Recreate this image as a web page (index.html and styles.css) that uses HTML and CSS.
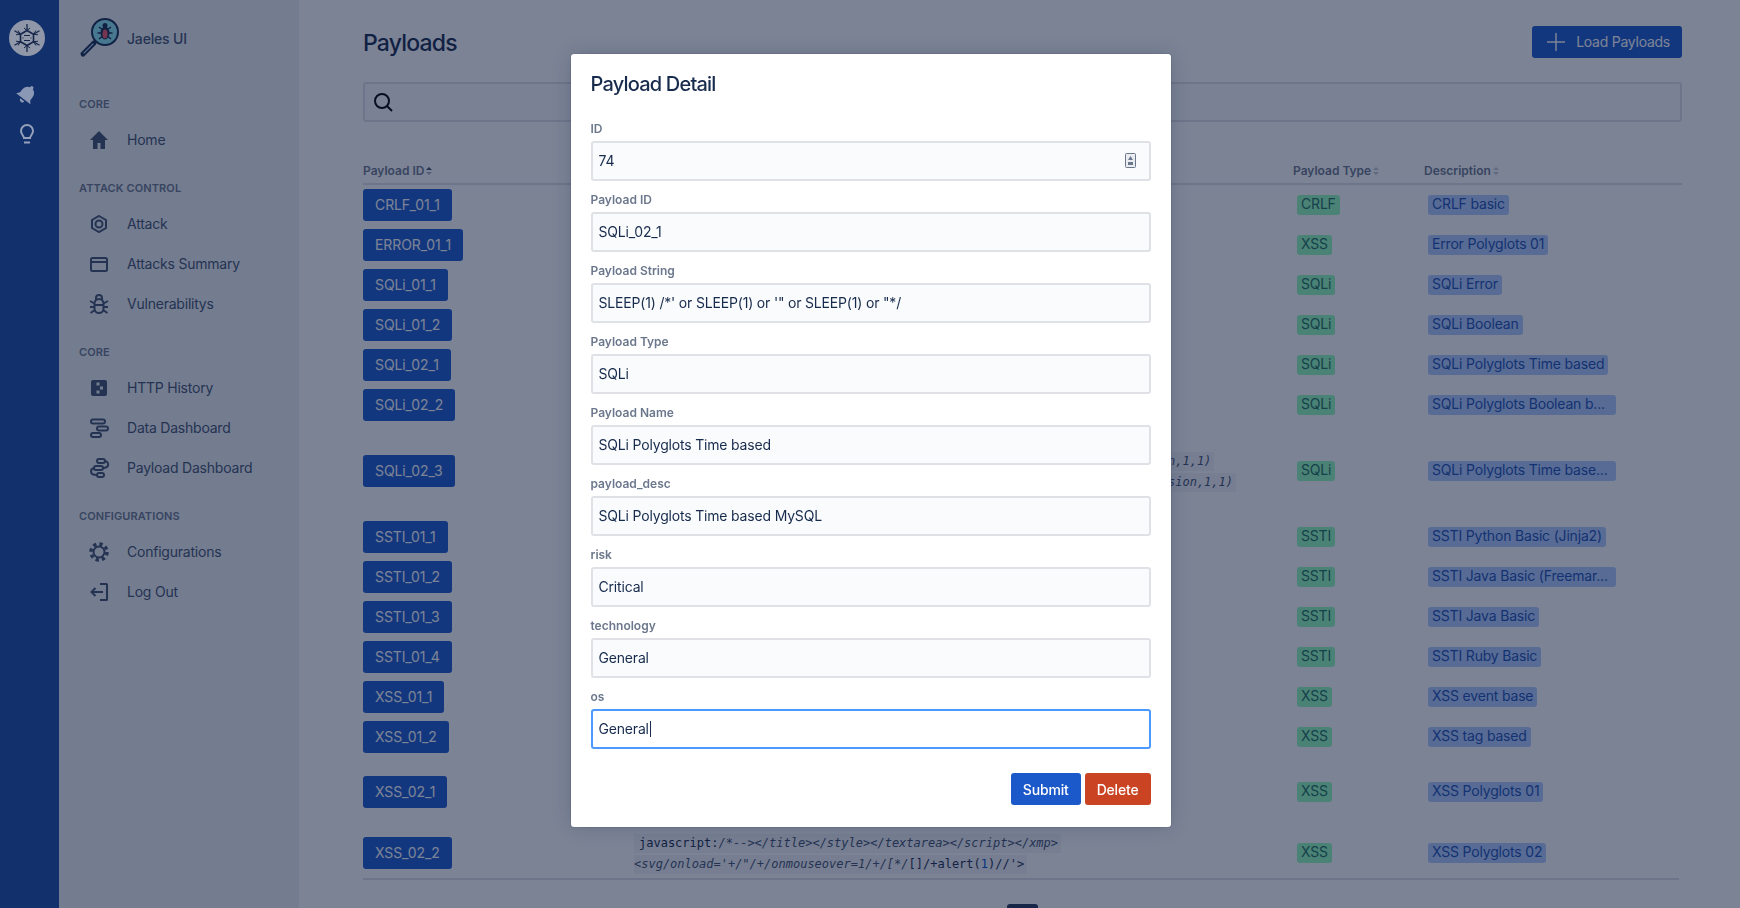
FILE: index.html
```html
<!DOCTYPE html>
<html lang="en">
<head>
    <meta charset="UTF-8">
    <title>Jaeles UI - Payloads</title>
    <link rel="stylesheet" href="styles.css">
</head>
<body>
    <div class="app">

        <nav class="rail">
            <svg class="rail-logo" viewBox="0 0 36 36">
                <circle cx="18" cy="18" r="18" fill="#8f97a9"/>
                <g fill="none" stroke="#16264a" stroke-width="1.300">
                    <path d="M18 10.500l6.500 3.750v7.500L18 25.500l-6.500-3.750v-7.500z" stroke-width="1.600"/>
                    <path d="M18 10.500V4M24.500 14.250l6-3.500M24.500 21.750l6 3.500M18 25.500V32M11.500 21.750l-6 3.500M11.500 14.250l-6-3.500"/>
                    <path d="M15 8l3 2.500 3-2.500M27 10.500l-2.500 3.750 4.500.5M29 21.250l-4.500 .5L27 25.500M21 28l-3-2.500-3 2.500M9 25.500l2.500-3.750-4.500-.5M7 14.750l4.500-.5L9 10.500" stroke-width="1"/>
                    <path d="M15 15.500h6M14.500 18l-1 0M22.500 18l-1 0M15 20.500h6" stroke-width="1"/>
                </g>
            </svg>
            <svg class="rail-icon" viewBox="0 0 24 24">
                <path fill="#8b98b5" transform="rotate(38 12 12)" d="M12 2.500a1.700 1.700 0 0 1 1.700 1.700v.6c3.200.8 4.800 3.500 4.800 6.700v3.500l2.500 3H3l2.500-3v-3.500c0-3.200 1.600-5.900 4.800-6.700v-.6A1.700 1.700 0 0 1 12 2.500zM9.500 19.500h5a2.500 2.500 0 0 1-5 0z"/>
            </svg>
            <svg class="rail-icon" viewBox="0 0 24 24" fill="none" stroke="#95a1ba" stroke-width="2">
                <path d="M9 16c0-2-3-3.500-3-7a6 6 0 0 1 12 0c0 3.500-3 5-3 7z"/>
                <path d="M9 20.500h6"/>
            </svg>
        </nav>

        <aside class="sidebar">
            <div class="brand">
                <svg class="brand-logo" viewBox="0 0 40 40">
                    <path d="M15 25L4 36" stroke="#172b4d" stroke-width="5" stroke-linecap="round"/>
                    <path d="M14 26L5 35" stroke="#a9c4e6" stroke-width="1.200" stroke-linecap="round"/>
                    <circle cx="26" cy="14" r="13" fill="#8fe8f5" stroke="#172b4d" stroke-width="2"/>
                    <path d="M20 9l4 3M32 9l-4 3M18.500 15h4M33.500 15h-4M20 21l3-2.500M32 21l-3-2.500" stroke="#172b4d" stroke-width="1.500"/>
                    <ellipse cx="26" cy="15" rx="4.500" ry="6.500" fill="#172b4d"/>
                    <ellipse cx="26" cy="16" rx="2.500" ry="4.500" fill="#f0566c"/>
                    <circle cx="26" cy="7.500" r="2.500" fill="#172b4d"/>
                </svg>
                <span>Jaeles UI</span>
            </div>

            <h4 class="nav-title">Core</h4>
            <a class="nav-item">
                <svg viewBox="0 0 24 24"><path class="solid" d="M12 3L3 12h3v9h4.500v-6h3v6H18v-9h3z"/></svg>
                Home
            </a>

            <h4 class="nav-title">Attack Control</h4>
            <a class="nav-item">
                <svg viewBox="0 0 24 24"><path class="line" d="M12 4l7 4v8l-7 4-7-4V8z"/><circle class="line" cx="12" cy="12" r="3.500"/></svg>
                Attack
            </a>
            <a class="nav-item">
                <svg viewBox="0 0 24 24"><rect class="line" x="4" y="6" width="16" height="13" rx="1.500"/><path class="line" d="M4 10h16"/></svg>
                Attacks Summary
            </a>
            <a class="nav-item">
                <svg viewBox="0 0 24 24"><rect class="line" x="7.500" y="7" width="9" height="14" rx="4.500"/><path class="line" d="M9 8V6a3 3 0 0 1 6 0v2M3 9l4.500 2.500M21 9l-4.500 2.500M3 15h4.500M21 15h-4.500M3.500 21l4.500-3M20.500 21L16 18M8 13h8"/></svg>
                Vulnerabilitys
            </a>

            <h4 class="nav-title">Core</h4>
            <a class="nav-item">
                <svg viewBox="0 0 24 24"><rect class="solid" x="4" y="4" width="16" height="16" rx="2"/><path fill="#edf0f3" d="M9.500 6.500h3v3h-3zM13 10.500h3v3h-3zM9.500 14.500h3v3h-3z"/></svg>
                HTTP History
            </a>
            <a class="nav-item">
                <svg viewBox="0 0 24 24"><rect class="line" x="4" y="3.500" width="14" height="4" rx="2"/><rect class="line" x="10" y="10.500" width="11" height="4" rx="2"/><rect class="line" x="4" y="17" width="10" height="4" rx="2"/></svg>
                Data Dashboard
            </a>
            <a class="nav-item">
                <svg viewBox="0 0 24 24"><rect class="line" x="10" y="3" width="8" height="4" rx="2"/><rect class="line" x="10" y="17" width="7" height="4" rx="2"/><rect class="line" x="7" y="10" width="9" height="4" rx="2"/><path class="line" d="M18 5c3 .500 3.500 3 3 4.500S18.500 12 16 12M7 12c-2 .500-3 2-3 3.500S5 19 10 19"/></svg>
                Payload Dashboard
            </a>

            <h4 class="nav-title">Configurations</h4>
            <a class="nav-item">
                <svg viewBox="0 0 24 24"><circle class="line" cx="12" cy="12" r="5.500" stroke-width="2.500"/><circle class="gear-teeth" cx="12" cy="12" r="8"/></svg>
                Configurations
            </a>
            <a class="nav-item">
                <svg viewBox="0 0 24 24"><path class="line" d="M13 4h6.500a.500.500 0 0 1 .500.500v15a.500.500 0 0 1-.500.500H13M16 12H4.500M8.500 8l-4 4 4 4"/></svg>
                Log Out
            </a>
        </aside>

        <main class="content">
            <header class="page-head">
                <h1>Payloads</h1>
                <button class="btn-primary btn-load">
                    <svg viewBox="0 0 24 24"><path d="M12 3v18M3 12h18" stroke="#fff" stroke-width="1.500"/></svg>
                    Load Payloads
                </button>
            </header>

            <div class="search">
                <svg viewBox="0 0 24 24" fill="none" stroke="#000" stroke-width="2"><circle cx="11" cy="11" r="7"/><path d="M16 16l5 5"/></svg>
            </div>

            <div class="table">
                <div class="row table-head">
                    <span>Payload ID<svg class="sort" viewBox="0 0 8 12"><path fill="#42526e" d="M4 2l3 3H1z"/><path fill="#a5adba" d="M4 10l3-3H1z"/></svg></span>
                    <span></span>
                    <span>Payload Type<svg class="sort" viewBox="0 0 8 12"><path fill="#c1c7d0" d="M4 2l3 3H1zM4 10l3-3H1z"/></svg></span>
                    <span>Description<svg class="sort" viewBox="0 0 8 12"><path fill="#c1c7d0" d="M4 2l3 3H1zM4 10l3-3H1z"/></svg></span>
                </div>

                <div class="row"><div><button class="btn-primary">CRLF_01_1</button></div><div></div><div class="cell-tag"><span class="tag tag-green">CRLF</span></div><div class="cell-tag"><span class="tag tag-blue">CRLF basic</span></div></div>
                <div class="row"><div><button class="btn-primary">ERROR_01_1</button></div><div></div><div class="cell-tag"><span class="tag tag-green">XSS</span></div><div class="cell-tag"><span class="tag tag-blue">Error Polyglots 01</span></div></div>
                <div class="row"><div><button class="btn-primary">SQLi_01_1</button></div><div></div><div class="cell-tag"><span class="tag tag-green">SQLi</span></div><div class="cell-tag"><span class="tag tag-blue">SQLi Error</span></div></div>
                <div class="row"><div><button class="btn-primary">SQLi_01_2</button></div><div></div><div class="cell-tag"><span class="tag tag-green">SQLi</span></div><div class="cell-tag"><span class="tag tag-blue">SQLi Boolean</span></div></div>
                <div class="row"><div><button class="btn-primary">SQLi_02_1</button></div><div></div><div class="cell-tag"><span class="tag tag-green">SQLi</span></div><div class="cell-tag"><span class="tag tag-blue">SQLi Polyglots Time based</span></div></div>
                <div class="row"><div><button class="btn-primary">SQLi_02_2</button></div><div></div><div class="cell-tag"><span class="tag tag-green">SQLi</span></div><div class="cell-tag"><span class="tag tag-blue tag-long">SQLi Polyglots Boolean b...</span></div></div>

                <div class="row row-tall">
                    <div><button class="btn-primary">SQLi_02_3</button></div>
                    <div class="code code-tail">
                        <code><i>n,1,1)</i></code>
                        <code><i>sion,1,1)</i></code>
                    </div>
                    <div class="cell-tag"><span class="tag tag-green">SQLi</span></div>
                    <div class="cell-tag"><span class="tag tag-blue tag-long">SQLi Polyglots Time base...</span></div>
                </div>

                <div class="row"><div><button class="btn-primary">SSTI_01_1</button></div><div></div><div class="cell-tag"><span class="tag tag-green">SSTI</span></div><div class="cell-tag"><span class="tag tag-blue">SSTI Python Basic (Jinja2)</span></div></div>
                <div class="row"><div><button class="btn-primary">SSTI_01_2</button></div><div></div><div class="cell-tag"><span class="tag tag-green">SSTI</span></div><div class="cell-tag"><span class="tag tag-blue tag-long">SSTI Java Basic (Freemar...</span></div></div>
                <div class="row"><div><button class="btn-primary">SSTI_01_3</button></div><div></div><div class="cell-tag"><span class="tag tag-green">SSTI</span></div><div class="cell-tag"><span class="tag tag-blue">SSTI Java Basic</span></div></div>
                <div class="row"><div><button class="btn-primary">SSTI_01_4</button></div><div></div><div class="cell-tag"><span class="tag tag-green">SSTI</span></div><div class="cell-tag"><span class="tag tag-blue">SSTI Ruby Basic</span></div></div>
                <div class="row"><div><button class="btn-primary">XSS_01_1</button></div><div></div><div class="cell-tag"><span class="tag tag-green">XSS</span></div><div class="cell-tag"><span class="tag tag-blue">XSS event base</span></div></div>
                <div class="row"><div><button class="btn-primary">XSS_01_2</button></div><div></div><div class="cell-tag"><span class="tag tag-green">XSS</span></div><div class="cell-tag"><span class="tag tag-blue">XSS tag based</span></div></div>
                <div class="row row-mid"><div><button class="btn-primary">XSS_02_1</button></div><div></div><div class="cell-tag"><span class="tag tag-green">XSS</span></div><div class="cell-tag"><span class="tag tag-blue">XSS Polyglots 01</span></div></div>

                <div class="row row-two">
                    <div><button class="btn-primary">XSS_02_2</button></div>
                    <div class="code">
                        <code class="code-indent">javascript:<i>/*--&gt;&lt;/title&gt;&lt;/style&gt;&lt;/textarea&gt;&lt;/script&gt;&lt;/xmp&gt;</i></code>
                        <code><i>&lt;svg/onload='+/"/+/onmouseover=1/+/[*/</i>[]/+alert(<b>1</b>)//'&gt;</code>
                    </div>
                    <div class="cell-tag"><span class="tag tag-green">XSS</span></div>
                    <div class="cell-tag"><span class="tag tag-blue">XSS Polyglots 02</span></div>
                </div>
            </div>

            <div class="table-foot"></div>
            <div class="pagination"><span class="page-current"></span></div>
        </main>
    </div>

    <!-- modal open over the table -->
    <div class="blanket">
        <section class="modal">
            <h2>Payload Detail</h2>
            <div class="modal-fields">
                <label>ID</label>
                <div class="input input-number">
                    <span>74</span>
                    <svg class="spinner" viewBox="0 0 11 15"><rect x=".5" y=".5" width="10" height="14" rx="1" fill="#ebecf0" stroke="#6b778c"/><path fill="#6b778c" d="M5.500 3L8 7H3zM3 9h5v3H3z"/></svg>
                </div>
                <label>Payload ID</label>
                <div class="input">SQLi_02_1</div>
                <label>Payload String</label>
                <div class="input">SLEEP(1) /*' or SLEEP(1) or '" or SLEEP(1) or "*/</div>
                <label>Payload Type</label>
                <div class="input">SQLi</div>
                <label>Payload Name</label>
                <div class="input">SQLi Polyglots Time based</div>
                <label>payload_desc</label>
                <div class="input">SQLi Polyglots Time based MySQL</div>
                <label>risk</label>
                <div class="input">Critical</div>
                <label>technology</label>
                <div class="input">General</div>
                <label>os</label>
                <div class="input input-focus">General<span class="caret"></span></div>
            </div>
            <div class="modal-actions">
                <button class="btn-submit">Submit</button>
                <button class="btn-delete">Delete</button>
            </div>
        </section>
    </div>
</body>
</html>
```

FILE: styles.css
```css
* {
    margin: 0;
    padding: 0;
    box-sizing: border-box;
}

html, body {
    height: 100%;
    overflow: hidden;
}

body {
    font-family: Inter, "Liberation Sans", sans-serif;
    font-size: 14px;
    letter-spacing: -.18px;
    color: #172b4d;
    background: #fff;
}

.app {
    display: flex;
    height: 100vh;
    overflow: hidden;
}

/* left blue rail sits above the blanket, colours are final */
.rail {
    position: relative;
    z-index: 2;
    width: 59px;
    flex-shrink: 0;
    background: #12306b;
    display: flex;
    flex-direction: column;
    align-items: center;
    padding: 20px 5px 0 0;
}

.rail-logo {
    width: 36px;
    height: 36px;
    margin-bottom: 26px;
}

.rail-icon {
    width: 24px;
    height: 24px;
    margin-bottom: 16px;
}

/* sidebar */
.sidebar {
    width: 240px;
    flex-shrink: 0;
    background: #edf0f3;
    padding: 18px 0 0 20px;
}

.brand {
    display: flex;
    align-items: center;
    gap: 8px;
    height: 40px;
    margin-bottom: 38px;
    font-weight: 500;
    color: #42526e;
}

.brand-logo {
    width: 40px;
    height: 40px;
}

.nav-title {
    font-size: 11px;
    line-height: 16px;
    font-weight: 600;
    letter-spacing: .1px;
    text-transform: uppercase;
    color: #6b778c;
    margin-bottom: 8px;
}

.nav-item {
    display: flex;
    align-items: center;
    gap: 16px;
    height: 40px;
    padding: 0 0 2px 8px;
    letter-spacing: -.22px;
    color: #42526e;
}

.nav-item + .nav-title {
    margin-top: 20px;
}

.nav-item svg {
    width: 24px;
    height: 24px;
    margin-top: 2px;
}

.solid {
    fill: #42526e;
}

.line {
    fill: none;
    stroke: #42526e;
    stroke-width: 2;
}

.gear-teeth {
    fill: none;
    stroke: #42526e;
    stroke-width: 3.5;
    stroke-dasharray: 3.3 3;
}

/* main area */
.content {
    flex: 1;
    padding: 26px 58px 0 64px;
}

.page-head {
    display: flex;
    justify-content: space-between;
    align-items: center;
    height: 32px;
    margin-bottom: 24px;
}

h1 {
    margin-top: 2px;
    font-size: 23px;
    font-weight: 500;
    letter-spacing: -.8px;
}

.btn-primary {
    display: inline-flex;
    align-items: center;
    height: 32px;
    padding: 0 12px 2px;
    border: 0;
    border-radius: 3px;
    background: #185ace;
    color: #fff;
    font-family: inherit;
    font-size: 14px;
    letter-spacing: -.1px;
}

.btn-load {
    gap: 8px;
    letter-spacing: -.25px;
}

.btn-load svg {
    width: 24px;
    height: 24px;
    margin-top: 2px;
}

.search {
    display: flex;
    align-items: center;
    height: 40px;
    padding-left: 6px;
    border: 2px solid #dfe1e6;
    border-radius: 3px;
    background: #fafbfc;
    margin-bottom: 41px;
}

.search svg {
    width: 24px;
    height: 24px;
}

/* table */
.row {
    display: grid;
    grid-template-columns: 271px 659px 131px 1fr;
    align-items: center;
    height: 40px;
}

.row-tall {
    height: 92px;
}

.row-mid {
    height: 70px;
}

.row-two {
    height: 52px;
}

.table-head {
    height: 22px;
    align-items: start;
    line-height: 16px;
    font-size: 12px;
    font-weight: 600;
    letter-spacing: 0;
    color: #6b778c;
    border-bottom: 2px solid #dfe1e6;
}

.sort {
    width: 8px;
    height: 12px;
    margin-left: 1px;
    vertical-align: -2px;
}

.table-foot {
    height: 2px;
    margin: -1px 3px 0 0;
    background: #dfe1e6;
}

.cell-tag {
    padding-left: 4px;
    min-width: 0;
}

.tag {
    display: inline-block;
    height: 20px;
    padding: 0 4px;
    border-radius: 3px;
    line-height: 18px;
    white-space: nowrap;
    vertical-align: middle;
}

.tag-long {
    width: 188px;
}

.tag-green {
    background: #94fdbb;
    color: #1f6f5a;
}

.tag-blue {
    background: #aecbff;
    color: #1c4fb0;
}

.code {
    display: flex;
    flex-direction: column;
    align-items: flex-start;
    gap: 2px;
    padding-top: 2px;
}

.code-tail {
    padding-left: 534px;
}

code {
    font-family: "DejaVu Sans Mono", "Liberation Mono", monospace;
    font-size: 12px;
    line-height: 19px;
    letter-spacing: 0;
    white-space: pre;
    padding-right: 3px;
    background: #f4f5f7;
    color: #172b4d;
}

code i {
    color: #42526e;
}

code b {
    font-weight: 400;
    color: #0052cc;
}

.code-indent {
    padding-left: 5px;
}

.pagination {
    display: flex;
    justify-content: center;
    margin-top: 24px;
}

.page-current {
    width: 31px;
    height: 32px;
    border-radius: 3px;
    background: #253858;
}

/* modal */
.blanket {
    position: fixed;
    z-index: 1;
    top: 0;
    left: 0;
    right: 0;
    bottom: 0;
    display: flex;
    justify-content: center;
    align-items: flex-start;
    padding: 54px 0 0 1px;
    background: rgba(13, 25, 60, .54);
}

.modal {
    width: 600px;
    height: 773px;
    padding: 18px 20px 0;
    border-radius: 3px;
    background: #fff;
    box-shadow: 0 0 0 1px rgba(9, 30, 66, .08), 0 0 20px rgba(9, 30, 66, .2);
}

h2 {
    font-size: 20px;
    line-height: 24px;
    font-weight: 500;
    letter-spacing: -.8px;
    margin-bottom: 25px;
}

.modal-fields label {
    display: block;
    margin: 11px 0 4px;
    font-size: 12px;
    line-height: 16px;
    font-weight: 600;
    letter-spacing: 0;
    color: #6b778c;
}

.input {
    display: flex;
    align-items: center;
    height: 40px;
    padding: 0 6px 1px;
    border: 2px solid #dfe1e6;
    border-radius: 3px;
    background: #fafbfc;
    font-size: 14px;
    white-space: pre;
}

.input-number {
    justify-content: space-between;
    padding-right: 13px;
}

.spinner {
    width: 11px;
    height: 15px;
}

.input-focus {
    border-color: #4c9aff;
    background: #fff;
}

.caret {
    width: 1px;
    height: 16px;
    margin-left: 1px;
    background: #172b4d;
}

.modal-actions {
    display: flex;
    justify-content: flex-end;
    gap: 4px;
    margin-top: 24px;
}

.modal-actions button {
    height: 32px;
    padding: 0 12px;
    border: 0;
    border-radius: 3px;
    color: #fff;
    font-family: inherit;
    font-size: 14px;
    font-weight: 500;
    letter-spacing: inherit;
}

.btn-submit {
    background: #1b58c9;
}

.btn-delete {
    background: #ca4424;
}
```
